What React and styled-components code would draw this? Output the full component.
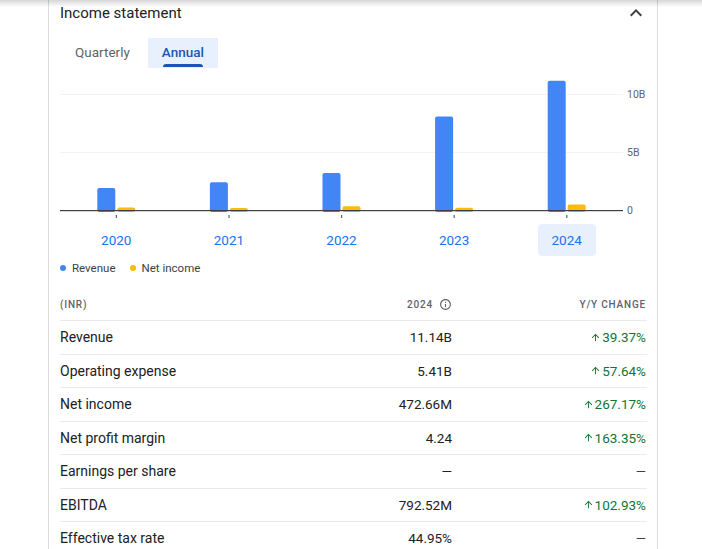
import React from 'react';
import styled, { createGlobalStyle } from 'styled-components';

const GlobalStyle = createGlobalStyle`
  html, body {
    margin: 0;
    padding: 0;
    background: #ffffff;
    font-family: Roboto, "Liberation Sans", Arial, sans-serif;
  }
`;

const years = [
  { year: '2020', revenue: 1.9, net: 0.22 },
  { year: '2021', revenue: 2.4, net: 0.15 },
  { year: '2022', revenue: 3.2, net: 0.33 },
  { year: '2023', revenue: 8.05, net: 0.2 },
  { year: '2024', revenue: 11.14, net: 0.47 },
];

const rows = [
  { label: 'Revenue', value: '11.14B', change: '39.37%' },
  { label: 'Operating expense', value: '5.41B', change: '57.64%' },
  { label: 'Net income', value: '472.66M', change: '267.17%' },
  { label: 'Net profit margin', value: '4.24', change: '163.35%' },
  { label: 'Earnings per share', value: '—', change: null },
  { label: 'EBITDA', value: '792.52M', change: '102.93%' },
  { label: 'Effective tax rate', value: '44.95%', change: null },
];

const PLOT_W = 563;
const BASE_Y = 142;
const PX_PER_B = 11.6;

const Chart = () => {
  const step = PLOT_W / years.length;
  return (
    <ChartSvg width="586" height="156" viewBox="0 0 586 156">
      <line x1="0" x2={PLOT_W} y1="26.5" y2="26.5" stroke="#f1f3f4" strokeWidth="1" />
      <line x1="0" x2={PLOT_W} y1="84.5" y2="84.5" stroke="#f1f3f4" strokeWidth="1" />
      {years.map((d, i) => {
        const c = step * i + step / 2;
        const rh = d.revenue * PX_PER_B;
        const nh = Math.max(d.net * PX_PER_B, 2);
        return (
          <g key={d.year}>
            <rect x={c - 19} y={BASE_Y - rh} width="18" height={rh + 2} rx="2" fill="#4285f4" />
            <rect x={c + 1} y={BASE_Y - nh} width="18" height={nh + 2} rx="2" fill="#fbbc04" />
            <rect x={c - 0.5} y={BASE_Y + 5} width="1.2" height="3" fill="#5f6368" />
          </g>
        );
      })}
      <rect x="0" y={BASE_Y} width={PLOT_W} height="1.2" fill="#3c4043" />
      <AxisText x="567" y="30">10B</AxisText>
      <AxisText x="567" y="88">5B</AxisText>
      <AxisText x="567" y="146">0</AxisText>
    </ChartSvg>
  );
};

const ChevronUp = () => (
  <svg width="24" height="24" viewBox="0 0 24 24">
    <path d="M12 8l-6 6 1.41 1.41L12 10.83l4.59 4.58L18 14z" fill="#3c4043" />
  </svg>
);

const InfoIcon = () => (
  <svg width="13" height="13" viewBox="0 0 24 24">
    <path
      d="M11 7h2v2h-2zm0 4h2v6h-2zm1-9C6.48 2 2 6.48 2 12s4.48 10 10 10 10-4.48 10-10S17.52 2 12 2zm0 18c-4.41 0-8-3.59-8-8s3.59-8 8-8 8 3.59 8 8-3.59 8-8 8z"
      fill="#5f6368"
    />
  </svg>
);

const ArrowUp = () => (
  <svg width="11" height="11" viewBox="0 0 24 24">
    <path d="M4 12l1.41 1.41L11 7.83V20h2V7.83l5.58 5.59L20 12l-8-8-8 8z" fill="#137333" />
  </svg>
);

const App = () => (
  <>
    <GlobalStyle />
    <TopShade />
    <Page>
      <Card>
        <CardHeader>
          <Title>Income statement</Title>
          <ChevronUp />
        </CardHeader>
        <Tabs>
          <Tab>Quarterly</Tab>
          <Tab active>Annual</Tab>
        </Tabs>
        <Chart />
        <YearRow>
          {years.map((d) => (
            <YearButton key={d.year} active={d.year === '2024'}>
              {d.year}
            </YearButton>
          ))}
        </YearRow>
        <Legend>
          <LegendItem>
            <Dot color="#4285f4" />
            Revenue
          </LegendItem>
          <LegendItem>
            <Dot color="#fbbc04" />
            Net income
          </LegendItem>
        </Legend>
        <Table>
          <HeaderRow>
            <HeadCell>(INR)</HeadCell>
            <HeadCell right>
              2024 <InfoIcon />
            </HeadCell>
            <HeadCell right>Y/Y change</HeadCell>
          </HeaderRow>
          {rows.map((r) => (
            <Row key={r.label}>
              <Label>{r.label}</Label>
              <Value>{r.value}</Value>
              {r.change ? (
                <Change>
                  <ArrowUp />
                  {r.change}
                </Change>
              ) : (
                <Dash>—</Dash>
              )}
            </Row>
          ))}
        </Table>
      </Card>
    </Page>
  </>
);

export default App;

const TopShade = styled.div`
  position: fixed;
  top: 0;
  left: 0;
  right: 0;
  height: 7px;
  background: linear-gradient(rgba(0, 0, 0, 0.16), rgba(0, 0, 0, 0));
  z-index: 2;
`;

const Page = styled.div`
  padding-left: 48px;
`;

const Card = styled.section`
  box-sizing: border-box;
  width: 610px;
  padding: 0 10px 0 11px;
  border-left: 1px solid #dadce0;
  border-right: 1px solid #dadce0;
  background: #fff;
  min-height: 549px;
`;

const CardHeader = styled.div`
  display: flex;
  align-items: center;
  justify-content: space-between;
  height: 26px;
  margin-right: -1px;
`;

const Title = styled.h2`
  margin: 0;
  font-size: 15px;
  font-weight: 400;
  color: #202124;
`;

const Tabs = styled.div`
  display: flex;
  gap: 4px;
  margin-top: 12px;
  padding-left: 1px;
`;

const Tab = styled.button`
  position: relative;
  height: 30px;
  padding: 0 14px 2px;
  border: none;
  border-radius: 0;
  background: ${(p) => (p.active ? '#e8f0fe' : 'transparent')};
  color: ${(p) => (p.active ? '#1a56b0' : '#5f6368')};
  font-family: inherit;
  font-size: 13.5px;
  font-weight: ${(p) => (p.active ? 500 : 400)};
  cursor: pointer;

  &::after {
    content: '';
    display: ${(p) => (p.active ? 'block' : 'none')};
    position: absolute;
    left: 15px;
    right: 15px;
    bottom: 1px;
    height: 3px;
    border-radius: 3px 3px 0 0;
    background: #1a56b0;
  }
`;

const ChartSvg = styled.svg`
  display: block;
`;

const AxisText = styled.text`
  font-size: 10.5px;
  fill: #5f6368;
  font-family: Roboto, "Liberation Sans", Arial, sans-serif;
`;

const YearRow = styled.div`
  display: grid;
  grid-template-columns: repeat(5, 1fr);
  width: 563px;
`;

const YearButton = styled.button`
  justify-self: center;
  width: 58px;
  height: 32px;
  border: none;
  border-radius: 4px;
  background: ${(p) => (p.active ? '#e8f0fe' : 'transparent')};
  color: #1a73e8;
  font-family: inherit;
  font-size: 13.5px;
  font-weight: 400;
  cursor: pointer;
`;

const Legend = styled.div`
  display: flex;
  gap: 14px;
  margin-top: 5px;
  height: 14px;
  align-items: center;
`;

const LegendItem = styled.span`
  display: flex;
  align-items: center;
  gap: 6px;
  font-size: 11.5px;
  font-weight: 400;
  color: #3c4043;
`;

const Dot = styled.span`
  width: 6px;
  height: 6px;
  border-radius: 50%;
  background: ${(p) => p.color};
`;

const Table = styled.div`
  margin-top: 13px;
`;

const rowGrid = `
  display: grid;
  grid-template-columns: 272px 120px 194px;
  align-items: center;
  box-sizing: border-box;
`;

const HeaderRow = styled.div`
  ${rowGrid}
  height: 32px;
`;

const HeadCell = styled.div`
  display: flex;
  align-items: center;
  justify-content: ${(p) => (p.right ? 'flex-end' : 'flex-start')};
  gap: 6px;
  font-size: 10px;
  font-weight: 500;
  letter-spacing: 0.8px;
  text-transform: uppercase;
  color: #5f6368;
`;

const Row = styled.div`
  ${rowGrid}
  height: 33.5px;
  border-top: 1px solid #e8eaed;
`;

const Label = styled.div`
  font-size: 14px;
  font-weight: 400;
  color: #202124;
`;

const Value = styled.div`
  text-align: right;
  font-size: 13.5px;
  font-weight: 400;
  color: #202124;
`;

const Change = styled.div`
  display: flex;
  align-items: center;
  justify-content: flex-end;
  gap: 1px;
  font-size: 13.5px;
  font-weight: 400;
  color: #137333;
`;

const Dash = styled.div`
  text-align: right;
  font-size: 13px;
  color: #3c4043;
`;
